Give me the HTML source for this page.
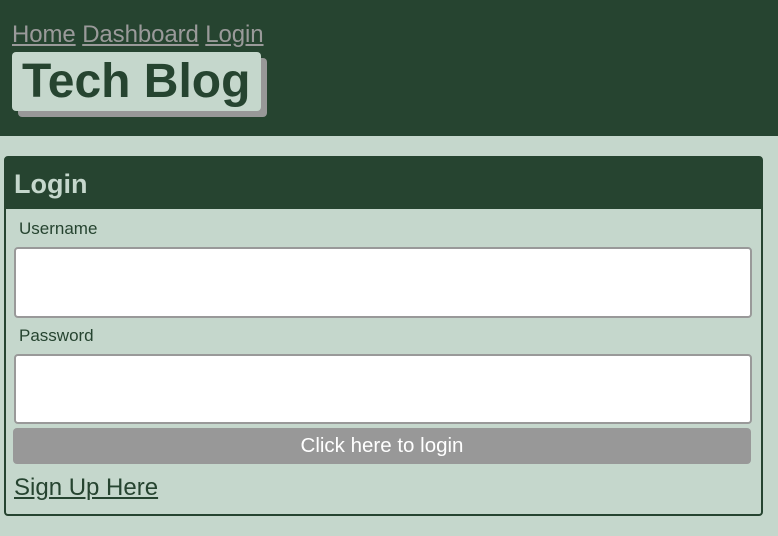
<!DOCTYPE html>
<html><head><meta charset="utf-8"><style>
*{margin:0;padding:0;box-sizing:border-box}
body{width:778px;height:536px;background:#c5d7cc;font-family:"Liberation Sans",Arial,sans-serif;position:relative;overflow:hidden}
.hdr{position:absolute;left:0;top:0;width:778px;height:136px;background:#264430}
.nav{position:absolute;left:12px;top:21px;font-size:24px;color:#9a9a9a;letter-spacing:-0.1px}
.nav a{color:#9a9a9a;text-decoration:underline}
.shadow{position:absolute;left:18px;top:58px;width:249px;height:59px;background:#989898;border-radius:4px}
.title{position:absolute;left:12px;top:52px;width:249px;height:59px;background:#c5d7cc;border-radius:4px;color:#264430;font-weight:bold;font-size:48px;line-height:59px;padding-left:10px;white-space:nowrap}
.card{position:absolute;left:4px;top:156px;width:759px;height:360px;border:2px solid #264430;border-radius:4px}
.ch{position:absolute;left:0;top:0;width:755px;height:51px;background:#264430;color:#c5d7cc;font-weight:bold;font-size:27px;line-height:52px;padding-left:8px}
.lbl{position:absolute;left:19px;font-size:17px;color:#264430}
.inp{position:absolute;left:14px;width:738px;background:#fff;border:2px solid #999;border-radius:4px}
.btn{position:absolute;left:13px;top:428px;width:738px;height:36px;background:#989898;border-radius:4px;color:#fff;font-size:20.5px;text-align:center;line-height:36px}
.su{position:absolute;left:14px;top:474px;font-size:24px;color:#264430;text-decoration:underline}
</style></head><body>
<div class="hdr">
<div class="nav"><a>Home</a> <a>Dashboard</a> <a>Login</a></div>
<div class="shadow"></div>
<div class="title">Tech Blog</div>
</div>
<div class="card"><div class="ch">Login</div></div>
<div class="lbl" style="top:219px">Username</div>
<div class="inp" style="top:247px;height:71px"></div>
<div class="lbl" style="top:326px">Password</div>
<div class="inp" style="top:354px;height:70px"></div>
<div class="btn">Click here to login</div>
<div class="su">Sign Up Here</div>
</body></html>
